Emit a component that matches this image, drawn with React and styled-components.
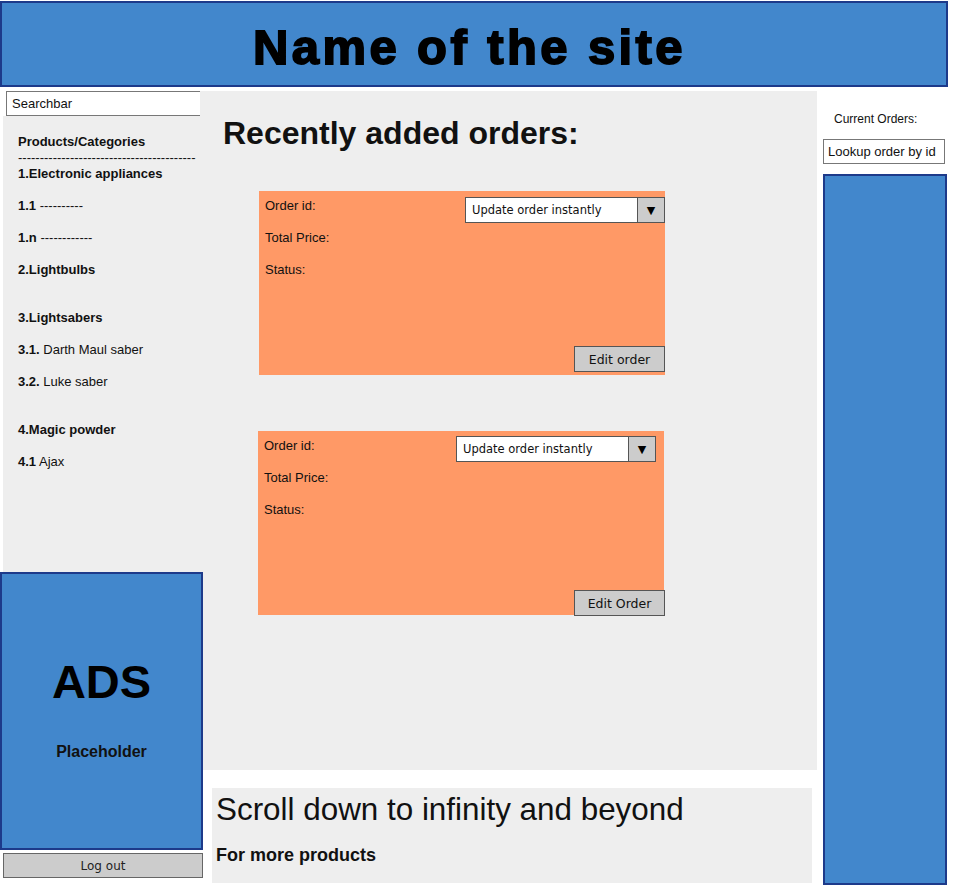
import React from 'react';
import styled, { createGlobalStyle } from 'styled-components';

const GlobalStyle = createGlobalStyle`
  body {
    margin: 0;
    background: #fff;
    font-family: 'Liberation Sans', Arial, sans-serif;
    color: #111;
  }
  * { box-sizing: border-box; }
`;

const sketchFont = `'Comic Sans MS', 'DejaVu Sans', sans-serif`;

const Page = styled.div`
  width: 953px;
  height: 890px;
  overflow: hidden;
`;

const Header = styled.header`
  margin-top: 1px;
  width: 948px;
  height: 86px;
  background: #4287cc;
  border: 2px solid #1d3a8a;
  display: flex;
  align-items: center;
  justify-content: center;
`;

const SiteTitle = styled.h1`
  margin: 5px 0 0 -9px;
  font-size: 49px;
  font-weight: 700;
  letter-spacing: 3.4px;
  -webkit-text-stroke: 1.8px #000;
  color: #000;
`;

const Body = styled.div`
  margin-top: 4px;
  display: flex;
  align-items: flex-start;
`;

const LeftCol = styled.aside`
  width: 200px;
  flex-shrink: 0;
  display: flex;
  flex-direction: column;
`;

const SearchBar = styled.div`
  margin-left: 6px;
  width: 194px;
  height: 25px;
  border: 1px solid #777;
  border-right: none;
  background: #fff;
  font-size: 13px;
  line-height: 23px;
  padding-left: 5px;
`;

const Sidebar = styled.nav`
  margin-left: 3px;
  width: 197px;
  height: 456px;
  background: #eeeeee;
  padding: 18px 0 0 15px;
`;

const Item = styled.div`
  font-size: 13px;
  line-height: 16px;
  margin-top: ${p => (p.gap === 'lg' ? 32 : p.gap === 'sm' ? 16 : 0)}px;
  font-weight: ${p => (p.bold ? 700 : 400)};

  b {
    font-weight: 700;
  }
`;

const Ads = styled.div`
  width: 203px;
  height: 278px;
  background: #4287cc;
  border: 2px solid #1d3a8a;
  display: flex;
  flex-direction: column;
  align-items: center;
  position: relative;
  z-index: 1;
`;

const AdsTitle = styled.div`
  margin-top: 82px;
  font-size: 47px;
  font-weight: 700;
  line-height: 52px;
  color: #000;
`;

const AdsSub = styled.div`
  margin-top: 35px;
  font-size: 16px;
  font-weight: 700;
`;

const LogOut = styled.button`
  margin: 3px 0 0 3px;
  width: 200px;
  height: 25px;
  background: #cccccc;
  border: 1.5px solid #666;
  font-family: ${sketchFont};
  font-size: 12px;
  color: #222;
  padding: 0;
`;

const MiddleCol = styled.div`
  width: 617px;
  flex-shrink: 0;
`;

const Main = styled.main`
  height: 679px;
  background: #eeeeee;
  padding: 23px 0 0 23px;
`;

const MainTitle = styled.h2`
  margin: 0;
  font-size: 32px;
  line-height: 38px;
  font-weight: 700;
`;

const Card = styled.section`
  margin-top: ${p => p.top}px;
  margin-left: ${p => p.left}px;
  width: 406px;
  height: 184px;
  background: #ff9966;
  padding: 7px 0 0 6px;
  display: flex;
  flex-direction: column;
`;

const CardTop = styled.div`
  display: flex;
  justify-content: space-between;
  align-items: flex-start;
`;

const Labels = styled.div`
  font-size: 13px;
  color: #111;
`;

const Label = styled.div`
  line-height: 16px;
  margin-top: ${p => (p.first ? 0 : 16)}px;
`;

const Select = styled.div`
  margin-top: ${p => p.dy}px;
  margin-right: ${p => p.dx}px;
  width: 200px;
  height: 26px;
  display: flex;
  background: #fff;
  border: 1.5px solid #555;
  font-family: ${sketchFont};
  font-size: 11.5px;
`;

const SelectText = styled.div`
  flex: 1;
  line-height: 24px;
  padding-left: 6px;
`;

const SelectArrow = styled.div`
  width: 27px;
  background: #cccccc;
  border-left: 1.5px solid #555;
  display: flex;
  align-items: center;
  justify-content: center;
  font-size: 11px;
  color: #000;
`;

const CardFoot = styled.div`
  margin-top: auto;
  display: flex;
  justify-content: flex-end;
  margin-right: ${p => p.dx}px;
  margin-bottom: ${p => p.dy}px;
`;

const EditButton = styled.button`
  width: 91px;
  height: 26px;
  background: #cccccc;
  border: 1.5px solid #555;
  font-family: ${sketchFont};
  font-size: 12.5px;
  color: #111;
  padding: 0;
`;

const Footer = styled.footer`
  margin: 18px 0 0 12px;
  width: 600px;
  height: 95px;
  background: #eeeeee;
  padding: 4px 0 0 4px;
`;

const FooterTitle = styled.div`
  font-size: 31.4px;
  line-height: 36px;
`;

const FooterSub = styled.div`
  margin-top: 16px;
  font-size: 18px;
  line-height: 22px;
  font-weight: 700;
`;

const RightCol = styled.aside`
  width: 136px;
  flex-shrink: 0;
  padding-left: 6px;
`;

const RightLabel = styled.div`
  margin-top: 20px;
  padding-left: 11px;
  font-size: 12px;
  line-height: 16px;
`;

const Lookup = styled.div`
  margin-top: 12px;
  width: 122px;
  height: 25px;
  border: 1px solid #777;
  background: #fff;
  font-size: 13px;
  line-height: 23px;
  padding-left: 4px;
  white-space: nowrap;
`;

const OrdersPanel = styled.div`
  margin-top: 10px;
  width: 124px;
  height: 711px;
  background: #4287cc;
  border: 2px solid #1d3a8a;
`;

const categories = [
  { gap: 'sm', num: '1.1', text: '----------' },
  { gap: 'sm', num: '1.n', text: '------------' },
  { gap: 'sm', num: '2.Lightbulbs', text: '' },
  { gap: 'lg', num: '3.Lightsabers', text: '' },
  { gap: 'sm', num: '3.1.', text: 'Darth Maul saber' },
  { gap: 'sm', num: '3.2.', text: 'Luke saber' },
  { gap: 'lg', num: '4.Magic powder', text: '' },
  { gap: 'sm', num: '4.1', text: 'Ajax' }
];

const orders = [
  { top: 39, left: 36, selDx: 0, selDy: -1, btnDx: 0, btnDy: 3, btn: 'Edit order' },
  { top: 56, left: 35, selDx: 8, selDy: -2, btnDx: -1, btnDy: -1, btn: 'Edit Order' }
];

const OrderCard = ({ o }) => (
  <Card top={o.top} left={o.left}>
    <CardTop>
      <Labels>
        <Label first>Order id:</Label>
        <Label>Total Price:</Label>
        <Label>Status:</Label>
      </Labels>
      <Select dx={o.selDx} dy={o.selDy}>
        <SelectText>Update order instantly</SelectText>
        <SelectArrow>▼</SelectArrow>
      </Select>
    </CardTop>
    <CardFoot dx={o.btnDx} dy={o.btnDy}>
      <EditButton>{o.btn}</EditButton>
    </CardFoot>
  </Card>
);

export default function App() {
  return (
    <Page>
      <GlobalStyle />
      <Header>
        <SiteTitle>Name of the site</SiteTitle>
      </Header>
      <Body>
        <LeftCol>
          <SearchBar>Searchbar</SearchBar>
          <Sidebar>
            <Item bold>Products/Categories</Item>
            <Item>-----------------------------------------</Item>
            <Item bold>1.Electronic appliances</Item>
            {categories.map(c => (
              <Item key={c.num} gap={c.gap}>
                <b>{c.num}</b> {c.text}
              </Item>
            ))}
          </Sidebar>
          <Ads>
            <AdsTitle>ADS</AdsTitle>
            <AdsSub>Placeholder</AdsSub>
          </Ads>
          <LogOut>Log out</LogOut>
        </LeftCol>
        <MiddleCol>
          <Main>
            <MainTitle>Recently added orders:</MainTitle>
            {orders.map((o, i) => (
              <OrderCard key={i} o={o} />
            ))}
          </Main>
          <Footer>
            <FooterTitle>Scroll down to infinity and beyond</FooterTitle>
            <FooterSub>For more products</FooterSub>
          </Footer>
        </MiddleCol>
        <RightCol>
          <RightLabel>Current Orders:</RightLabel>
          <Lookup>Lookup order by id</Lookup>
          <OrdersPanel />
        </RightCol>
      </Body>
    </Page>
  );
}
